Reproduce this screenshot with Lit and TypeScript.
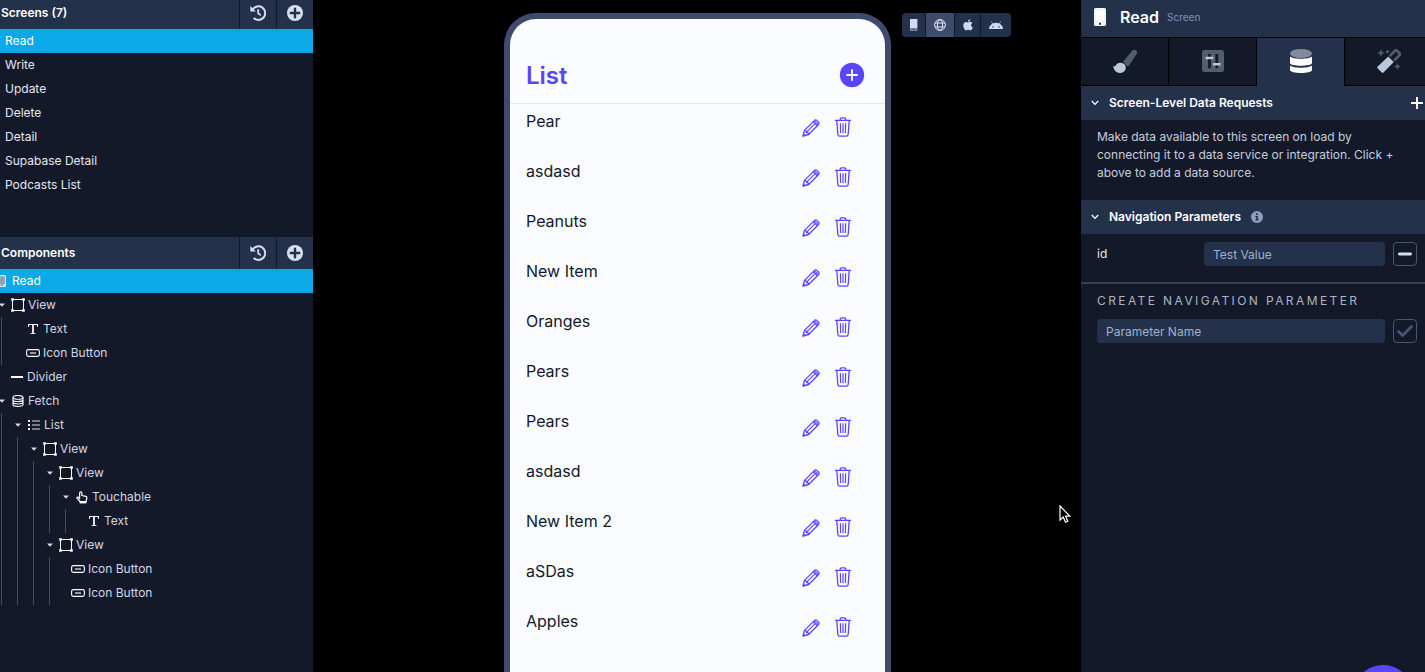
import { LitElement, html, css, svg, nothing, TemplateResult } from "lit";
import { customElement, property, state } from "lit/decorators.js";
import { classMap } from "lit/directives/class-map.js";

type TreeNode = {
  label: string;
  icon: string;
  deep?: boolean;
  children?: TreeNode[];
};

const SCREENS = ["Read", "Write", "Update", "Delete", "Detail", "Supabase Detail", "Podcasts List"];

const ITEMS = [
  "Pear", "asdasd", "Peanuts", "New Item", "Oranges", "Pears",
  "Pears", "asdasd", "New Item 2", "aSDas", "Apples",
];

const TREE: TreeNode[] = [
  {
    label: "View",
    icon: "view",
    children: [
      { label: "Text", icon: "text" },
      { label: "Icon Button", icon: "button" },
    ],
  },
  { label: "Divider", icon: "divider" },
  {
    label: "Fetch",
    icon: "fetch",
    children: [
      {
        label: "List",
        icon: "list",
        children: [
          {
            label: "View",
            icon: "view",
            children: [
              {
                label: "View",
                icon: "view",
                children: [
                  {
                    label: "Touchable",
                    icon: "touch",
                    children: [{ label: "Text", icon: "text", deep: true }],
                  },
                ],
              },
              {
                label: "View",
                icon: "view",
                children: [
                  { label: "Icon Button", icon: "button", deep: true },
                  { label: "Icon Button", icon: "button", deep: true },
                ],
              },
            ],
          },
        ],
      },
    ],
  },
];

const draw = (w: number, h: number, body: unknown, box = `0 0 ${w} ${h}`) =>
  html`<svg width=${w} height=${h} viewBox=${box} fill="none" aria-hidden="true">${body}</svg>`;

const ICONS: Record<string, TemplateResult> = {
  history: draw(16, 16, svg`
    <path d="M2.6 4.6A6.8 6.8 0 1 1 3.6 12.9" stroke="currentColor" stroke-width="2"/>
    <path d="M.3 1v5.6h5.6z" fill="currentColor"/>
    <path d="M8.2 4.2v4.2l2.5 1.9" stroke="currentColor" stroke-width="1.8"/>`),
  plusCircle: draw(16, 16, svg`
    <circle cx="8" cy="8" r="8" fill="currentColor"/>
    <path d="M8 3.8v8.4M3.8 8h8.4" stroke="#24314b" stroke-width="2.4" stroke-linecap="round"/>`),
  caret: draw(6, 4, svg`<path d="M0 .4h6L3 3.8z" fill="currentColor"/>`),
  view: draw(14, 14, svg`
    <path d="M1.5 1.5h11v11h-11z" stroke="#fff"/>
    <path d="M.2.2h2.600v2.600H.2zM11.200.2h2.600v2.600h-2.600zM.2 11.200h2.600v2.600H.2zM11.200 11.200h2.600v2.600h-2.600z" fill="#fff"/>`),
  text: draw(10, 10, svg`
    <path d="M0 0h10v3H9.200l-.5-1.900H5.900v7.800l1.600.3v.8h-5v-.8l1.600-.3V1.100H1.300L.8 3H0z" fill="#f4f4f6"/>`),
  button: draw(14, 8, svg`
    <rect x=".6" y=".6" width="12.8" height="6.8" rx="1.8" stroke="#fff" stroke-width="1.1"/>
    <path d="M4 4h6" stroke="#b4b8c2" stroke-width="1.6"/>`),
  divider: draw(12, 2, svg`<path d="M0 1h12" stroke="#fff" stroke-width="2"/>`),
  fetch: draw(12, 12, svg`
    <ellipse cx="6" cy="2.4" rx="5" ry="1.9" stroke="#fff" stroke-width="1.1"/>
    <path d="M1 2.4v7.4c0 2.2 10 2.2 10 0V2.4M1 4.9c0 2.2 10 2.2 10 0M1 7.3c0 2.2 10 2.2 10 0" stroke="#fff" stroke-width="1.1"/>`),
  list: draw(12, 10, svg`
    <path d="M0 1h2M0 5h2M0 9h2" stroke="#fff" stroke-width="2"/>
    <path d="M4 1h8M4 5h8M4 9h8" stroke="#d9dce3" stroke-width="1.1"/>`),
  touch: draw(12, 13, svg`
    <path d="M3.6 7.6V1.9a1.1 1.1 0 0 1 2.2 0v2.6l4 .9c.9.2 1.2.8 1 1.7l-.8 3.4H4.2L1 7.3c-.4-.9.5-1.6 1.3-1z" stroke="#fff" stroke-width="1.2" stroke-linejoin="round"/>
    <path d="M3.6 10h6.8v2.4H3.6z" fill="#fff"/>`),
  screenSmall: draw(12, 12, svg`
    <rect x=".6" y=".6" width="10.8" height="10.8" rx="1" fill="#8f9dc4" stroke="#dfe6f4" stroke-width="1.2"/>
    <path d="M1 9.6h10V11H1z" fill="#dfe6f4"/><path d="M7 10h2v1H7z" fill="#0ca9e9"/>`),
  pencil: draw(18, 18, svg`
    <g stroke="currentColor" stroke-width="1.300" stroke-linejoin="round">
      <path d="M1 17l1.500-5.600L12.500 1.400a1.600 1.600 0 0 1 2.300 0l1.800 1.800a1.600 1.600 0 0 1 0 2.300L6.600 15.500z"/>
      <path d="M2.500 11.400c1-.2 1.900.3 1.900 2 1.700 0 2.300.9 2.200 2.100M11.200 2.700l4.100 4.100"/>
      <path d="M4.600 13.200l8-8M12.300 1.600l4.100 4.100" stroke-width="1.100"/>
    </g>
    <path d="M.6 17.400l.8-3.200 2.400 2.400z" fill="currentColor"/>`),
  trash: draw(16, 20, svg`
    <g stroke="currentColor" stroke-width="1.3">
      <path d="M0 3.3h16M5.2 3V2.1C5.2 1.2 5.8.8 6.6.8h2.8c.8 0 1.4.4 1.4 1.3V3M1.8 3.5l1 13.7c.1 1.4.8 2 2 2h6.4c1.2 0 1.9-.6 2-2l1-13.7"/>
      <path d="M5.4 6.2l.2 9.9M8 6.2v9.9M10.6 6.2l-.2 9.9" stroke-width="1.2"/>
    </g>`),
  addItem: draw(26, 26, svg`
    <circle cx="13" cy="13" r="12.2" fill="#5a45ff"/>
    <path d="M13 8v10M8 13h10" stroke="#fff" stroke-width="1.8" stroke-linecap="round"/>`),
  phone: draw(8, 12, svg`
    <path d="M0 0h7.400v9H0z" fill="#cfdcf0"/><path d="M0 9h7.400v3H0z" fill="#7482a0"/>
    <path d="M3 10h1.400v1H3z" fill="#24314b"/>`),
  globe: draw(12, 12, svg`
    <g stroke="currentColor"><circle cx="6" cy="6" r="5.4"/><ellipse cx="6" cy="6" rx="2.6" ry="5.4"/>
    <path d="M1 4h10M1 8h10"/></g>`),
  apple: draw(10, 12, svg`
    <path d="M4.9 3.4C5.700 3.400 6.200 2.800 7.300 2.800c.9 0 1.600.4 2.100 1.100-1.900 1.100-1.600 3.700.4 4.500-.5 1.400-1.500 2.900-2.500 2.900-.8 0-1.100-.5-2-.5s-1.300.5-2 .5C1.900 11.300.3 8.700.3 6.400c0-2.200 1.300-3.500 2.700-3.500.8 0 1.400.5 1.900.5zM4.900 2.600C4.900 1.200 5.900.3 7.100.2c.1 1.300-.9 2.400-2.200 2.400z" fill="currentColor"/>`),
  android: draw(14, 8, svg`
    <path d="M0 8C.2 5.400 1.600 3.700 3.300 2.700L2.100.6l.5-.3 1.200 2.200a7.600 7.600 0 0 1 6.400 0L11.400.3l.5.3-1.200 2.100C12.400 3.700 13.800 5.400 14 8z" fill="currentColor"/>
    <path d="M3.300 5.200h1.200v1.200H3.300zM9.500 5.200h1.200v1.200H9.500z" fill="#24314b"/>`),
  screen: draw(12, 18, svg`
    <rect width="12" height="18" rx="1.600" fill="#f7f9fd"/><path d="M1.500 1.500h9v12h-9z" fill="#fff" stroke="#e3e6ee" stroke-width=".6"/>
    <path d="M5 14.800h2v2H5z" fill="#24314b"/>`),
  brush: draw(24, 24, svg`
    <path d="M10.200 12.700L19.300 1.500C21.400-.6 25.200 1.600 23.800 4.700L16 16.600c-.7 1-1.900.8-2.400.2z" fill="#535d70"/>
    <path d="M7.500 13.700c3.300.2 5.500 2.300 5.300 5.200-.3 3.300-3.200 5.100-6.300 5C3 23.800.9 21.200 0 16.800c1.200 1 2.300.8 2.900-.5.800-1.800 2.300-2.700 4.600-2.600z" fill="#bac7dc"/>`),
  sliders: draw(22, 22, svg`
    <rect width="22" height="22" rx="2.500" fill="#535d70"/>
    <path d="M7.500 4v14.200M14.800 4v14.200" stroke="#131929" stroke-width="2.800"/>
    <path d="M3.600 8h7.800M11 14.200h7.600" stroke="#bac7dc" stroke-width="2.600"/>`),
  database: draw(22, 24, svg`
    <ellipse cx="11" cy="4.500" rx="11" ry="4.500" fill="#828a9b"/>
    <path d="M0 7.500c3.500 3 18.500 3 22 0V14c0 3.600-22 3.600-22 0zM0 16.500c3.500 3 18.500 3 22 0V21c0 4-22 4-22 0z" fill="#fff"/>`),
  wand: draw(24, 24, svg`
    <path d="M12.800 7.200L18.200 1.500c.5-.5 1-.5 1.500 0l3 3c.5.5.5 1 0 1.500l-5.500 5.500" stroke="#535d70" stroke-width="2.600"/>
    <path d="M11.300 7.600l5.500 5.400L6.500 23.500c-.6.6-1.200.6-1.800 0L.6 19.300c-.6-.6-.6-1.200 0-1.800z" fill="#bac7dc"/>
    <path d="M4 0l1.100 2.900L8 4 5.100 5.100 4 8 2.900 5.100 0 4l2.900-1.100zM20.400 14l1.100 2.500 2.500 1-2.500 1.100-1.100 2.500-1-2.500-2.500-1.100 2.500-1zM10.500.2l.8 1.800 1.800.7-1.800.7-.8 1.800-.7-1.800L8 2.700 9.800 2z" fill="#535d70"/>`),
  chevron: draw(8, 6, svg`<path d="M.8 1L4 4.400 7.200 1" stroke="#fff" stroke-width="1.300"/>`),
  plus: draw(12, 12, svg`<path d="M6 0v12M0 6h12" stroke="#fff" stroke-width="2"/>`),
  info: draw(12, 12, svg`
    <circle cx="6" cy="6" r="6" fill="#8f9dbd"/><path d="M5.100 2.200h1.800V4H5.100zM4.400 5h2.500v3.400h.8v1.200H4.300V8.400h.9V6.200h-.8z" fill="#24314b"/>`),
  minus: draw(14, 4, svg`<path d="M1.400 2h11.200" stroke="#d6e0f0" stroke-width="2.800" stroke-linecap="round"/>`),
  check: draw(16, 12, svg`<path d="M1.500 6.500l4 4L14.500 1.500" stroke="#475677" stroke-width="2.800" stroke-linecap="round"/>`),
  cursor: draw(12, 18, svg`
    <path d="M1 1v14l3.200-3 2.300 5.200 2.300-1-2.200-5h4.200z" fill="#000" stroke="#fff" stroke-width="1.200"/>`),
};

const base = css`
  *, *::before, *::after { box-sizing: border-box; }
  ul { list-style: none; margin: 0; padding: 0; }
  h1, h2, h3, p { margin: 0; font: inherit; }
  button {
    display: flex; align-items: center; justify-content: center;
    margin: 0; padding: 0; border: 0; background: none;
    font: inherit; color: inherit; cursor: pointer;
  }
  svg { display: block; flex: none; }
`;

@customElement("nav-panel")
export class NavPanel extends LitElement {
  static styles = [base, css`
    :host {
      display: flex; flex-direction: column; overflow: hidden;
      background: #131929; color: #d0d8e6;
    }
    .screens { flex: none; height: 237px; color: #e4e9f2; }
    .bar { display: flex; height: 32px; background: #24314b; color: #d4dff0; }
    .bar.top { height: 29px; }
    .top > * { padding-bottom: 3px; }
    .title {
      flex: 1; display: flex; align-items: center; padding-left: 1px;
      font-weight: 600; color: #fff;
    }
    .tool { width: 37px; border-left: 1px solid #131929; }
    .row { display: flex; align-items: center; height: 24px; width: 100%; }
    .screen { justify-content: flex-start; padding-left: 5px; text-align: left; }
    .selected { background: #0ca9e9; color: #fff; }
    .current { margin-left: -6px; gap: 6px; width: auto; }
    .root { margin-left: -14px; }
    .children { margin-left: 15px; border-left: 1px solid #454c5c; }
    .node { padding-left: 8px; }
    .twist { width: 16px; flex: none; height: 24px; padding-right: 1px; }
    .leaf { width: 15px; }
    .deep { width: 12px; }
    .icon { display: flex; justify-content: center; width: 16px; margin-right: 2px; flex: none; }
  `];

  @state() private selected = 0;

  private node(n: TreeNode): TemplateResult {
    return html`<li>
      <div class="row node">
        ${n.children
          ? html`<button class="twist" aria-label="Collapse ${n.label}">${ICONS.caret}</button>`
          : html`<span class=${classMap({ twist: true, leaf: true, deep: !!n.deep })}></span>`}
        <span class="icon">${ICONS[n.icon]}</span><span>${n.label}</span>
      </div>
      ${n.children ? html`<ul class="children">${n.children.map((c) => this.node(c))}</ul>` : nothing}
    </li>`;
  }

  private bar(title: string, top: boolean) {
    return html`<header class=${classMap({ bar: true, top })}>
      <h2 class="title">${title}</h2>
      <button class="tool" aria-label="History">${ICONS.history}</button>
      <button class="tool" aria-label="Add">${ICONS.plusCircle}</button>
    </header>`;
  }

  render() {
    return html`
      <section class="screens">
        ${this.bar(`Screens (${SCREENS.length})`, true)}
        <ul>
          ${SCREENS.map((s, i) => html`<li>
            <button class=${classMap({ row: true, screen: true, selected: i === this.selected })}
              @click=${() => (this.selected = i)}>${s}</button>
          </li>`)}
        </ul>
      </section>
      <section>
        ${this.bar("Components", false)}
        <div class="row selected current">${ICONS.screenSmall}<span>Read</span></div>
        <ul class="root">${TREE.map((n) => this.node(n))}</ul>
      </section>`;
  }
}

@customElement("device-stage")
export class DeviceStage extends LitElement {
  static styles = [base, css`
    :host {
      display: grid; grid-template-columns: 1fr auto 1fr; column-gap: 11px;
      padding: 13px 0 0 1px; background: #000; overflow: hidden; position: relative;
    }
    .device {
      grid-column: 2; width: 387px; color: #131929;
      border: 6px solid #3e4b6c; border-bottom: 0;
      border-radius: 32px 32px 0 0; background: #fbfcff;
    }
    .head {
      display: flex; align-items: center; justify-content: space-between;
      height: 85px; padding: 28px 20px 0 16px; border-bottom: 1px solid #e4e6f0;
    }
    .name { padding-top: 2px; font-size: 24px; line-height: 32px; font-weight: 600; color: #5a45ff; }
    .item {
      display: flex; justify-content: space-between; height: 50px;
      padding: 5px 34px 0 16px; font-size: 16px; line-height: 24px;
    }
    .actions { display: flex; align-items: flex-end; gap: 15px; height: 28px; color: #5a45ff; }
    .modes { display: flex; justify-self: start; height: 24px; border-radius: 4px; overflow: hidden; background: #24314b; color: #cfdcf0; }
    .mode { width: 28px; }
    .mode:first-child { width: 23px; }
    .mode:last-child { width: 30px; }
    .mode:nth-child(3) { width: 25px; }
    .mode + .mode { border-left: 1px solid #131929; box-sizing: content-box; }
    .on { background: #3e4b6c; color: #dfe5f0; }
    .cursor { position: absolute; right: 10px; top: 505px; pointer-events: none; }
  `];

  render() {
    return html`
      <main class="device">
        <header class="head">
          <h1 class="name">List</h1>
          <button aria-label="Add item">${ICONS.addItem}</button>
        </header>
        <ul>
          ${ITEMS.map((t) => html`<li class="item">
            <span>${t}</span>
            <span class="actions">
              <button aria-label="Edit ${t}">${ICONS.pencil}</button>
              <button aria-label="Delete ${t}">${ICONS.trash}</button>
            </span>
          </li>`)}
        </ul>
      </main>
      <div class="modes">
        <button class="mode" aria-label="Phone">${ICONS.phone}</button>
        <button class="mode on" aria-label="Web">${ICONS.globe}</button>
        <button class="mode" aria-label="Apple">${ICONS.apple}</button>
        <button class="mode" aria-label="Android">${ICONS.android}</button>
      </div>
      <span class="cursor">${ICONS.cursor}</span>`;
  }
}

@customElement("config-panel")
export class ConfigPanel extends LitElement {
  static styles = [base, css`
    :host {
      display: block; overflow: hidden; position: relative;
      background: #131929; color: #c5cedd;
    }
    .head { display: flex; align-items: center; height: 37px; padding: 0 12px 3px 13px; background: #24314b; }
    .name { margin: 0 8px 0 14px; font-size: 16px; font-weight: 600; color: #fff; }
    .kind { font-size: 10px; color: #8291b0; }
    .tabs { display: flex; height: 49px; border-top: 1px solid #000; }
    .tab { flex: none; width: 88px; padding-bottom: 2px; border-right: 1px solid #000; border-bottom: 1px solid #000; }
    .tab.on { background: #24314b; border-bottom-color: #24314b; }
    .bar { display: flex; align-items: center; height: 34px; padding-left: 10px; background: #24314b; }
    .title { margin: 0 10px; font-weight: 600; color: #fff; }
    .add { margin: 0 2px 0 auto; }
    .note { padding: 8px 16px 18px; line-height: 18px; }
    .param { display: flex; align-items: center; gap: 8px; padding: 8px 8px 16px 16px; border-bottom: 2px solid #34405a; }
    .label { flex: 1; color: #e4e9f2; }
    .field {
      min-width: 0; height: 24px; border: 0; border-radius: 4px; padding: 0 9px;
      background: #24314b; color: #e4e9f2; font: inherit; outline: 0;
    }
    .value { width: 181px; }
    .field::placeholder { color: #a3b0c8; opacity: 1; }
    .act { flex: none; width: 24px; height: 24px; border: 1px solid #475677; border-radius: 4px; }
    .caption { padding: 7px 16px 8px; line-height: 20px; letter-spacing: 0.2em; color: #a9b4c8; }
    .create { display: flex; align-items: center; gap: 8px; padding: 0 8px 0 16px; }
    .create .field { flex: 1; }
    .help {
      position: absolute; right: 12px; bottom: -53px; width: 60px; height: 60px;
      border-radius: 50%; background: #5a45ff;
    }
  `];

  @property({ type: Number }) tab = 2;

  render() {
    const tabs = [["Style", "brush"], ["Configuration", "sliders"], ["Data", "database"], ["Actions", "wand"]];
    return html`
      <header class="head">${ICONS.screen}<h2 class="name">Read</h2><span class="kind">Screen</span></header>
      <nav class="tabs">
        ${tabs.map(([name, icon], i) => html`<button class=${classMap({ tab: true, on: i === this.tab })}
          aria-label=${name} @click=${() => (this.tab = i)}>${ICONS[icon]}</button>`)}
      </nav>
      <section>
        <div class="bar">${ICONS.chevron}<h3 class="title">Screen-Level Data Requests</h3>
          <button class="add" aria-label="Add data request">${ICONS.plus}</button></div>
        <p class="note">Make data available to this screen on load by connecting it to a data service or integration. Click + above to add a data source.</p>
      </section>
      <section>
        <div class="bar">${ICONS.chevron}<h3 class="title">Navigation Parameters</h3>${ICONS.info}</div>
        <div class="param">
          <label class="label" for="value">id</label>
          <input class="field value" id="value" placeholder="Test Value">
          <button class="act" aria-label="Remove parameter">${ICONS.minus}</button>
        </div>
        <h3 class="caption"><label for="param-name">CREATE NAVIGATION PARAMETER</label></h3>
        <div class="create">
          <input class="field" id="param-name" placeholder="Parameter Name">
          <button class="act" aria-label="Create parameter">${ICONS.check}</button>
        </div>
      </section>
      <button class="help" aria-label="Help"></button>`;
  }
}

@customElement("app-root")
export class AppRoot extends LitElement {
  static styles = css`
    :host {
      display: grid; grid-template-columns: 313px minmax(0, 1fr) 344px;
      grid-template-rows: 100vh; overflow: hidden; background: #000;
      font: 12px/16px Inter, "Liberation Sans", sans-serif;
    }
  `;

  render() {
    return html`<nav-panel></nav-panel><device-stage></device-stage><config-panel></config-panel>`;
  }
}
